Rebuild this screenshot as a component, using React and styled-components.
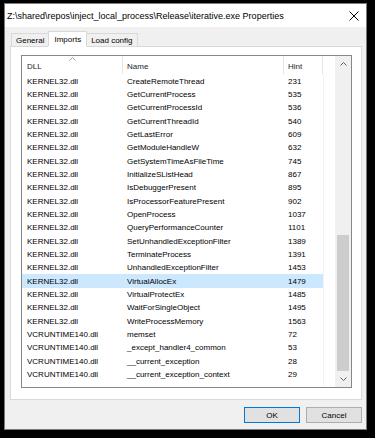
import styled, { createGlobalStyle } from "styled-components";

const imports = [
  { dll: "KERNEL32.dll", name: "CreateRemoteThread", hint: 231 },
  { dll: "KERNEL32.dll", name: "GetCurrentProcess", hint: 535 },
  { dll: "KERNEL32.dll", name: "GetCurrentProcessId", hint: 536 },
  { dll: "KERNEL32.dll", name: "GetCurrentThreadId", hint: 540 },
  { dll: "KERNEL32.dll", name: "GetLastError", hint: 609 },
  { dll: "KERNEL32.dll", name: "GetModuleHandleW", hint: 632 },
  { dll: "KERNEL32.dll", name: "GetSystemTimeAsFileTime", hint: 745 },
  { dll: "KERNEL32.dll", name: "InitializeSListHead", hint: 867 },
  { dll: "KERNEL32.dll", name: "IsDebuggerPresent", hint: 895 },
  { dll: "KERNEL32.dll", name: "IsProcessorFeaturePresent", hint: 902 },
  { dll: "KERNEL32.dll", name: "OpenProcess", hint: 1037 },
  { dll: "KERNEL32.dll", name: "QueryPerformanceCounter", hint: 1101 },
  { dll: "KERNEL32.dll", name: "SetUnhandledExceptionFilter", hint: 1389 },
  { dll: "KERNEL32.dll", name: "TerminateProcess", hint: 1391 },
  { dll: "KERNEL32.dll", name: "UnhandledExceptionFilter", hint: 1453 },
  { dll: "KERNEL32.dll", name: "VirtualAllocEx", hint: 1479, selected: true },
  { dll: "KERNEL32.dll", name: "VirtualProtectEx", hint: 1485 },
  { dll: "KERNEL32.dll", name: "WaitForSingleObject", hint: 1495 },
  { dll: "KERNEL32.dll", name: "WriteProcessMemory", hint: 1563 },
  { dll: "VCRUNTIME140.dll", name: "memset", hint: 72 },
  { dll: "VCRUNTIME140.dll", name: "_except_handler4_common", hint: 53 },
  { dll: "VCRUNTIME140.dll", name: "__current_exception", hint: 28 },
  { dll: "VCRUNTIME140.dll", name: "__current_exception_context", hint: 29 },
];

const tabs = [
  { id: "general", label: "General" },
  { id: "imports", label: "Imports", active: true },
  { id: "load", label: "Load config" },
];

const GlobalStyle = createGlobalStyle`
  *, *::before, *::after {
    box-sizing: border-box;
  }
  html, body {
    margin: 0;
    background: #000;
  }
  body {
    padding: 3px 0 0 4px;
    font-family: "Liberation Sans", Arial, sans-serif;
  }
`;

const Window = styled.div`
  width: 363px;
  height: 427px;
  border: 1px solid #7a7a7a;
  background: #f0f0f0;
  display: flex;
  flex-direction: column;
`;

const TitleBar = styled.div`
  flex: 0 0 23px;
  background: #fff;
  display: flex;
  align-items: center;
  justify-content: space-between;
  padding: 0 7px 0 2px;
  font-size: 9px;
  color: #000;
`;

const Body = styled.div`
  flex: 1;
  display: flex;
  flex-direction: column;
  padding: 4px 4px 0 5px;
`;

const TabStrip = styled.div`
  display: flex;
  align-items: flex-end;
  flex: 0 0 15px;
  padding-left: 1px;
  position: relative;
  z-index: 1;
`;

const Tab = styled.div`
  height: ${(p) => (p.$active ? "16px" : "13px")};
  padding: 0 ${(p) => (p.$active ? "5px" : "4px")};
  display: flex;
  align-items: center;
  font-size: 8px;
  color: #000;
  background: ${(p) => (p.$active ? "#fff" : "#f0f0f0")};
  border: 1px solid #d9d9d9;
  border-bottom: ${(p) => (p.$active ? "1px solid #fff" : "none")};
  margin-bottom: ${(p) => (p.$active ? "-1px" : "0")};
  margin-left: ${(p) => (p.$first ? "0" : "-1px")};
`;

const Panel = styled.div`
  flex: 0 0 354px;
  background: #fff;
  border: 1px solid #d9d9d9;
  padding: 8px 9px 11px 10px;
`;

const ListBox = styled.div`
  height: 333px;
  border: 1px solid #828790;
  display: flex;
  font-size: 8px;
  color: #000;
`;

const ListMain = styled.div`
  flex: 1;
  display: flex;
  flex-direction: column;
`;

const HeaderRow = styled.div`
  flex: 0 0 18px;
  display: grid;
  grid-template-columns: 101px 161px 39px 1fr;
  position: relative;
`;

const HeaderCell = styled.div`
  display: flex;
  align-items: center;
  padding: 3px 0 0 ${(p) => (p.$first ? "5px" : "4px")};
  border-right: ${(p) => (p.$last ? "none" : "1px solid #e5e5e5")};
  color: #1e1e1e;
`;

const SortArrow = styled.svg`
  position: absolute;
  left: 47px;
  top: 1px;
`;

const Rows = styled.div`
  width: 302px;
  padding-top: 0.5px;
  border-right: 1px solid #eef3f9;
  flex: 1;
`;

const Row = styled.div`
  height: 13.33px;
  display: grid;
  grid-template-columns: 101px 161px 39px;
  align-items: center;
  background: ${(p) => (p.$selected ? "#cce8ff" : "transparent")};
`;

const Cell = styled.div`
  padding-left: ${(p) => (p.$first ? "5px" : "4px")};
  white-space: nowrap;
  overflow: hidden;
  line-height: 13px;
`;

const ScrollBar = styled.div`
  width: 16px;
  background: #f0f0f0;
  display: flex;
  flex-direction: column;
`;

const ScrollButton = styled.div`
  flex: 0 0 16px;
  display: flex;
  align-items: center;
  justify-content: center;
`;

const ScrollTrack = styled.div`
  flex: 1;
  display: flex;
  flex-direction: column;
  justify-content: flex-end;
  align-items: center;
`;

const Thumb = styled.div`
  width: 12px;
  height: 136px;
  background: #cdcdcd;
`;

const ButtonRow = styled.div`
  display: flex;
  justify-content: flex-end;
  gap: 6px;
  margin-top: 7px;
`;

const Button = styled.div`
  width: 56px;
  height: 16px;
  display: flex;
  align-items: center;
  justify-content: center;
  font-size: 8px;
  color: #000;
  background: #e1e1e1;
  border: 1px solid ${(p) => (p.$default ? "#0078d7" : "#adadad")};
`;

const Chevron = ({ up }) => (
  <svg width="7" height="4" viewBox="0 0 7 4">
    <path
      d={up ? "M0.5 3.5 L3.5 0.5 L6.5 3.5" : "M0.5 0.5 L3.5 3.5 L6.5 0.5"}
      fill="none"
      stroke="#606060"
      strokeWidth="1"
    />
  </svg>
);

const App = () => {
  return (
    <>
      <GlobalStyle />
      <Window>
        <TitleBar>
          <span>Z:\shared\repos\inject_local_process\Release\iterative.exe Properties</span>
          <svg width="10" height="10" viewBox="0 0 10 10">
            <path d="M0.5 0.5 L9.5 9.5 M9.5 0.5 L0.5 9.5" stroke="#000" strokeWidth="1" />
          </svg>
        </TitleBar>
        <Body>
          <TabStrip>
            {tabs.map((t, i) => (
              <Tab key={t.id} $active={t.active} $first={i === 0}>
                {t.label}
              </Tab>
            ))}
          </TabStrip>
          <Panel>
            <ListBox>
              <ListMain>
                <HeaderRow>
                  <SortArrow width="7" height="4" viewBox="0 0 7 4">
                    <path d="M0.5 3.5 L3.5 0.5 L6.5 3.5" fill="none" stroke="#a0a0a0" strokeWidth="1" />
                  </SortArrow>
                  <HeaderCell $first>DLL</HeaderCell>
                  <HeaderCell>Name</HeaderCell>
                  <HeaderCell>Hint</HeaderCell>
                  <HeaderCell $last />
                </HeaderRow>
                <Rows>
                  {imports.map((imp) => (
                    <Row key={imp.name} $selected={imp.selected}>
                      <Cell $first>{imp.dll}</Cell>
                      <Cell>{imp.name}</Cell>
                      <Cell>{imp.hint}</Cell>
                    </Row>
                  ))}
                </Rows>
              </ListMain>
              <ScrollBar>
                <ScrollButton>
                  <Chevron up />
                </ScrollButton>
                <ScrollTrack>
                  <Thumb />
                </ScrollTrack>
                <ScrollButton>
                  <Chevron />
                </ScrollButton>
              </ScrollBar>
            </ListBox>
          </Panel>
          <ButtonRow>
            <Button $default>OK</Button>
            <Button>Cancel</Button>
          </ButtonRow>
        </Body>
      </Window>
    </>
  );
};

export default App;
